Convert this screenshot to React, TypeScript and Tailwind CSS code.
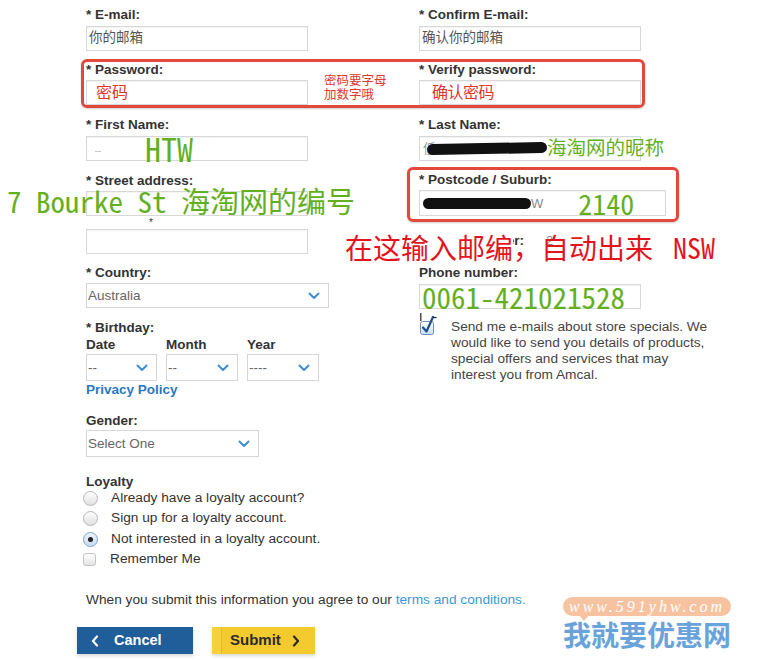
import React from "react";

const annot = "font-['Noto_Sans_Mono_CJK_SC','Noto_Sans_CJK_SC',monospace]";

function Label({
  children,
  className = "",
  color = "text-[#333]",
}: {
  children: React.ReactNode;
  className?: string;
  color?: string;
}) {
  return (
    <div className={`whitespace-nowrap text-[13.5px] font-bold leading-[15px] ${color} ${className}`}>{children}</div>
  );
}

function Input({ children, className = "" }: { children?: React.ReactNode; className?: string }) {
  return (
    <div
      className={`flex h-[25px] items-center whitespace-nowrap border border-[#d8d8d8] bg-white shadow-[inset_0_1px_1px_rgba(0,0,0,0.05)] ${className}`}
    >
      {children}
    </div>
  );
}

function Chevron() {
  return (
    <svg width="12" height="8" viewBox="0 0 12 8" fill="none">
      <path d="M1.5 1.5 6 6l4.5-4.5" stroke="#3f8fd0" strokeWidth="2" strokeLinecap="round" strokeLinejoin="round" />
    </svg>
  );
}

function Select({ value, className = "" }: { value: string; className?: string }) {
  return (
    <div
      className={`flex items-center justify-between border border-[#d6d6d6] bg-white pl-[1px] pr-[8px] text-[13.5px] leading-[15px] text-[#666] ${className}`}
    >
      <span>{value}</span>
      <Chevron />
    </div>
  );
}

function Radio({ checked = false }: { checked?: boolean }) {
  return (
    <span
      className={`flex h-[15px] w-[15px] shrink-0 items-center justify-center rounded-full border ${
        checked
          ? "border-[#7aa3d2] bg-gradient-to-b from-[#eef5fc] to-[#c7dbf0]"
          : "border-[#b8b8b8] bg-gradient-to-b from-white to-[#e0e0e0]"
      }`}
    >
      {checked && <span className="h-[5px] w-[5px] rounded-full bg-[#222]" />}
    </span>
  );
}

export default function App() {
  return (
    <div className="relative h-[660px] w-[763px] overflow-hidden bg-white font-['Liberation_Sans','Noto_Sans_CJK_SC',sans-serif] text-[#333]">
      <div className="pt-[7px]">
        {/* e-mail row */}
        <div className="ml-[86px] grid grid-cols-[333px_223px]">
          <div>
            <Label>* E-mail:</Label>
            <Input className="mt-[4px] w-[222px]">
              <span className="pl-[2px] text-[13.5px] text-[#555]">你的邮箱</span>
            </Input>
          </div>
          <div>
            <Label>* Confirm E-mail:</Label>
            <Input className="mt-[4px] w-[222px]">
              <span className="pl-[2px] text-[13.5px] text-[#555]">确认你的邮箱</span>
            </Input>
          </div>
        </div>

        {/* password row, boxed in red */}
        <div className="ml-[81px] mt-[8px] w-[564px] rounded-[6px] border-[3px] border-[#e2483c] pl-[2px] shadow-[0_1px_2px_rgba(0,0,0,0.2)]">
          <div className="grid grid-cols-[333px_223px]">
            <div className="flex items-end">
              <div className="w-[222px]">
                <Label>* Password:</Label>
                <Input className="mt-[3px] w-[222px]">
                  <span className="pl-[9px] text-[16px] text-[#e0352b]">密码</span>
                </Input>
              </div>
              <div className="mb-[3px] ml-[16px] text-[12.5px] leading-[14px] text-[#e0392d]">
                密码要字母
                <br />
                加数字哦
              </div>
            </div>
            <div>
              <Label>* Verify password:</Label>
              <Input className="mt-[3px] w-[222px]">
                <span className="pl-[12px] text-[16px] tracking-[-0.5px] text-[#e0352b]">确认密码</span>
              </Input>
            </div>
          </div>
        </div>

        {/* name row */}
        <div className="ml-[86px] mt-[9px] grid grid-cols-[333px_223px]">
          <div>
            <Label>* First Name:</Label>
            <Input className="mt-[4px] w-[222px]">
              <span className="ml-[8px] mt-[5px] h-[1px] w-[6px] shrink-0 bg-[#c8c8c8]" />
              <span className={`ml-[44px] shrink-0 text-[32px] font-medium leading-[25px] text-[#63b01f] ${annot}`}>HTW</span>
            </Input>
          </div>
          <div>
            <Label>* Last Name:</Label>
            <Input className="mt-[4px] w-[222px]">
              <span className="ml-[3px] shrink-0 text-[13px] leading-[15px] text-[#999]">低</span>
              <span className="-ml-[9px] h-[11px] w-[120px] shrink-0 -rotate-1 rounded-full bg-[#111]" />
              <span className="shrink-0 text-[19.5px] leading-[25px] text-[#63b01f]">海淘网的昵称</span>
            </Input>
          </div>
        </div>
      </div>

      <div className="flex">
        {/* left column */}
        <div className="ml-[86px] w-[321px] shrink-0">
          <Label className="mt-[12px]">* Street address:</Label>
          <Input className="mt-[3px] w-[222px]" />
          <div className="h-[13px] pl-[63px] text-[10px] leading-[13px] text-[#333]">*</div>
          <Input className="w-[222px]" />

          <Label className="mt-[11px]">* Country:</Label>
          <Select value="Australia" className="mt-[3px] h-[25px] w-[243px]" />

          <Label className="mt-[12px]">* Birthday:</Label>
          <div className="mt-[2px] flex">
            <div className="w-[80px]">
              <Label>Date</Label>
              <Select value="--" className="mt-[2px] h-[27px] w-[71px]" />
            </div>
            <div className="w-[81px]">
              <Label>Month</Label>
              <Select value="--" className="mt-[2px] h-[27px] w-[72px]" />
            </div>
            <div className="w-[81px]">
              <Label>Year</Label>
              <Select value="----" className="mt-[2px] h-[27px] w-[72px]" />
            </div>
          </div>
          <Label className="mt-[1px]" color="text-[#2a78c2]">
            Privacy Policy
          </Label>

          <Label className="mt-[16px]">Gender:</Label>
          <Select value="Select One" className="mt-[2px] h-[27px] w-[173px]" />

          <Label className="mt-[17px]">Loyalty</Label>
          <div className="-ml-[3px] -mt-[1px] text-[13.7px] text-[#333]">
            <div className="flex h-[20.5px] items-center gap-[13px]">
              <Radio />
              <span>Already have a loyalty account?</span>
            </div>
            <div className="flex h-[20.5px] items-center gap-[13px]">
              <Radio />
              <span>Sign up for a loyalty account.</span>
            </div>
            <div className="flex h-[20.5px] items-center gap-[13px]">
              <Radio checked />
              <span>Not interested in a loyalty account.</span>
            </div>
            <div className="flex h-[20.5px] items-center gap-[14px]">
              <span className="h-[13px] w-[13px] rounded-[3px] border border-[#c4c4c4] bg-gradient-to-b from-white to-[#e4e4e4]" />
              <span>Remember Me</span>
            </div>
          </div>

          <div className="mt-[22px] whitespace-nowrap text-[13.7px] leading-[15px] text-[#333]">
            When you submit this information you agree to our{" "}
            <span className="text-[#3a9ad6]">terms and conditions.</span>
          </div>

          <div className="-ml-[9px] mt-[20px] flex gap-[19px]">
            <button className="flex h-[27px] w-[116px] items-center bg-[#1f5e98] pl-[14px] text-[14.5px] font-bold text-white shadow-[0_2px_3px_rgba(0,0,0,0.15)]">
              <svg width="8" height="12" viewBox="0 0 8 12" fill="none">
                <path d="M6 1.5 2 6l4 4.5" stroke="#fff" strokeWidth="2.2" strokeLinecap="round" strokeLinejoin="round" />
              </svg>
              <span className="ml-[15px]">Cancel</span>
            </button>
            <button className="flex h-[27px] w-[103px] items-center bg-[#f4cb2e] text-[15px] font-bold text-[#2b2b2b] shadow-[0_2px_3px_rgba(0,0,0,0.15)]">
              <span className="h-full w-[10px] border-r border-[#e6bb22] bg-[#f6d13c]" />
              <span className="ml-[8px]">Submit</span>
              <svg className="ml-[11px]" width="8" height="12" viewBox="0 0 8 12" fill="none">
                <path d="M2 1.5 6 6l-4 4.5" stroke="#2b2b2b" strokeWidth="2.2" strokeLinecap="round" strokeLinejoin="round" />
              </svg>
            </button>
          </div>
        </div>

        {/* right column */}
        <div className="w-[330px] shrink-0">
          <div className="mt-[6px] w-[272px] rounded-[6px] border-[3px] border-[#e2483c] pb-[3px] pl-[9px] pt-[2px] shadow-[0_1px_2px_rgba(0,0,0,0.2)]">
            <Label>* Postcode / Suburb:</Label>
            <Input className="mt-[3px] h-[26px] w-[247px]">
              <span className="ml-[3px] h-[11px] w-[108px] shrink-0 rounded-full bg-[#111]" />
              <span className="shrink-0 text-[13px] leading-[15px] text-[#888]">W</span>
              <span className={`ml-[35px] shrink-0 text-[28px] leading-[26px] text-[#63b01f] ${annot}`}>2140</span>
            </Input>
          </div>

          <div className="ml-[12px] mt-[11px] flex items-center">
            <Label className="w-[127px]">* Street number:</Label>
            <span className="text-[13px] leading-[15px] text-[#888]">2</span>
          </div>

          <Label className="ml-[12px] mt-[17px]">Phone number:</Label>
          <Input className="ml-[12px] mt-[4px] w-[222px] overflow-visible">
            <span className={`ml-[2px] shrink-0 text-[29px] leading-[25px] text-[#63b01f] ${annot}`}>0061-421021528</span>
          </Input>

          <div className="ml-[12px] mt-[3px] flex">
            <svg width="20" height="26" viewBox="0 0 20 26" fill="none" className="shrink-0">
              <defs>
                <linearGradient id="cbg" x1="0" y1="0" x2="0" y2="1">
                  <stop offset="0" stopColor="#ffffff" />
                  <stop offset="1" stopColor="#c9dcf1" />
                </linearGradient>
              </defs>
              <rect x="1.5" y="9.5" width="13" height="13" rx="2" fill="url(#cbg)" stroke="#6f8fb8" />
              <path d="M4 15.5 7.5 19.5 14 5" stroke="#1f4f8f" strokeWidth="2.2" strokeLinecap="round" strokeLinejoin="round" />
              <path d="M1.8 1v8" stroke="#222" strokeWidth="1.2" />
              <path d="M14 5.5h3.5" stroke="#222" strokeWidth="1.2" />
            </svg>
            <div className="ml-[12px] mt-[7px] whitespace-nowrap text-[13.7px] leading-[16px] text-[#444]">
              Send me e-mails about store specials. We
              <br />
              would like to send you details of products,
              <br />
              special offers and services that may
              <br />
              interest you from Amcal.
            </div>
          </div>
        </div>
      </div>

      {/* handwritten-style annotations laid over the form */}
      <div className={`absolute left-[7px] top-[185px] whitespace-nowrap text-[29px] leading-[30px] text-[#63b01f] ${annot}`}>
        7 Bourke St 海淘网的编号
      </div>
      <div className={`absolute left-[345px] top-[233px] whitespace-nowrap text-[28px] leading-[28px] text-[#e3141c] ${annot}`}>
        <span className="bg-white">在这输入邮编</span>，自动出来 <span className="ml-[6px]">NSW</span>
      </div>

      {/* watermark */}
      <div className="absolute left-[563px] top-[597px] w-[168px]">
        <div className="relative h-[19px] rounded-full bg-[#f7c29f] text-center font-['Liberation_Serif',serif] text-[16px] italic leading-[19px] tracking-[3px] text-white">
          www.591yhw.com
          <span className="absolute left-[16px] top-[18px] h-0 w-0 border-x-[5px] border-t-[6px] border-x-transparent border-t-[#f7c29f]" />
        </div>
        <div className="mt-[2px] font-['Noto_Sans_CJK_SC',sans-serif] text-[28px] font-bold leading-[32px] text-[#5a9ad8] opacity-90">
          我就要优惠网
        </div>
      </div>
    </div>
  );
}
